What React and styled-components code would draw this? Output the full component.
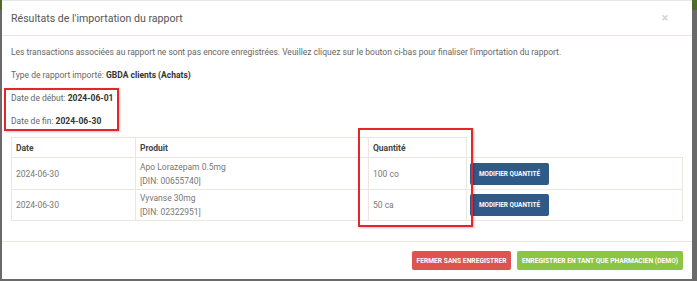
import React from 'react'
import styled, { createGlobalStyle } from 'styled-components'

const GlobalStyle = createGlobalStyle`
  html, body {
    margin: 0;
    padding: 0;
    background: #5f5f5f;
    font-family: Roboto, "Liberation Sans", sans-serif;
  }
  * { box-sizing: border-box; }
`

const Backdrop = styled.div`
  width: 697px;
  height: 281px;
  padding: 0 5px 2px 2px;
  background: linear-gradient(to bottom, #4e6b2a 0, #4e6b2a 10px, #6a6a6a 10px);
`

const Modal = styled.div`
  position: relative;
  height: 279px;
  background: #fff;
  border-top: 1px solid #e9e7e4;
  display: flex;
  flex-direction: column;
`

const Header = styled.div`
  height: 35px;
  border-bottom: 1px solid #ebe6df;
  display: flex;
  align-items: center;
  justify-content: space-between;
  padding: 0 24px 0 9px;
`

const Title = styled.h4`
  margin: 0;
  font-size: 10.6px;
  font-weight: 400;
  color: #555;
`

const Close = styled.span`
  font-size: 12px;
  color: #d8d3cc;
  font-weight: 700;
`

const Body = styled.div`
  padding: 10px 9px 20px 9px;
  border-bottom: 1px solid #ebe6df;
`

const Para = styled.p`
  margin: 0 0 ${p => p.gap || 11}px;
  font-size: 8.5px;
  line-height: 12px;
  color: #666;

  b { color: #333; font-weight: 700; }
`

const Table = styled.table`
  width: 672px;
  border-collapse: collapse;
  font-size: 8.5px;
  color: #777;
`

const Th = styled.th`
  height: 20px;
  text-align: left;
  padding: 0 4px;
  font-weight: 700;
  color: #444;
  border: 1px solid #ebe6df;
  width: ${p => p.w}px;

  &:last-child {
    border-top: none;
    border-right: none;
  }
`

const Td = styled.td`
  height: ${p => p.h || 32}px;
  padding: 0 4px;
  line-height: 14px;
  border: 1px solid #ebe6df;
  vertical-align: middle;

  &:last-child { padding-left: 3px; }
`

const EditButton = styled.button`
  width: 79px;
  height: 22px;
  border: none;
  border-radius: 2px;
  background: #2f5a88;
  color: #fff;
  font-family: Roboto, "Liberation Sans", sans-serif;
  font-size: 6.4px;
  font-weight: 700;
  padding: 0;
`

const Footer = styled.div`
  flex: 1;
  display: flex;
  justify-content: flex-end;
  align-items: flex-start;
  gap: 6px;
  padding: 9px 9px 0;
`

const FooterButton = styled.button`
  height: 19px;
  width: ${p => p.w}px;
  border: none;
  border-radius: 2px;
  background: ${p => (p.danger ? '#dc5350' : '#8cc443')};
  color: #fff;
  font-family: Roboto, "Liberation Sans", sans-serif;
  font-size: 6.7px;
  font-weight: 700;
  padding: 0;
`

const Highlight = styled.div`
  position: absolute;
  left: ${p => p.x}px;
  top: ${p => p.y}px;
  width: ${p => p.w}px;
  height: ${p => p.h}px;
  border: 2px solid #e3262b;
  box-shadow: 1px 1px 2px rgba(0, 0, 0, 0.25);
  pointer-events: none;
`

const rows = [
  { date: '2024-06-30', name: 'Apo Lorazepam 0.5mg', din: '00655740', qty: '100 co', h: 32 },
  { date: '2024-06-30', name: 'Vyvanse 30mg', din: '02322951', qty: '50 ca', h: 31 },
]

export default function App() {
  return (
    <>
      <GlobalStyle />
      <Backdrop>
        <Modal>
          <Header>
            <Title>Résultats de l'importation du rapport</Title>
            <Close>×</Close>
          </Header>
          <Body>
            <Para>
              Les transactions associées au rapport ne sont pas encore enregistrées. Veuillez cliquez sur le bouton ci-bas pour finaliser l'importation du rapport.
            </Para>
            <Para>
              Type de rapport importé: <b>GBDA clients (Achats)</b>
            </Para>
            <Para>
              Date de début: <b>2024-06-01</b>
            </Para>
            <Para gap={10}>
              Date de fin: <b>2024-06-30</b>
            </Para>
            <Table>
              <thead>
                <tr>
                  <Th w={124}>Date</Th>
                  <Th w={233}>Produit</Th>
                  <Th w={98}>Quantité</Th>
                  <Th />
                </tr>
              </thead>
              <tbody>
                {rows.map(r => (
                  <tr key={r.din}>
                    <Td h={r.h}>{r.date}</Td>
                    <Td h={r.h}>
                      {r.name}
                      <br />
                      [DIN: {r.din}]
                    </Td>
                    <Td h={r.h}>{r.qty}</Td>
                    <Td h={r.h}>
                      <EditButton>MODIFIER QUANTITÉ</EditButton>
                    </Td>
                  </tr>
                ))}
              </tbody>
            </Table>
          </Body>
          <Footer>
            <FooterButton danger w={99}>FERMER SANS ENREGISTRER</FooterButton>
            <FooterButton w={166}>ENREGISTRER EN TANT QUE PHARMACIEN (DEMO)</FooterButton>
          </Footer>
          <Highlight x={2} y={87} w={115} h={43} />
          <Highlight x={356} y={127} w={115} h={99} />
        </Modal>
      </Backdrop>
    </>
  )
}
